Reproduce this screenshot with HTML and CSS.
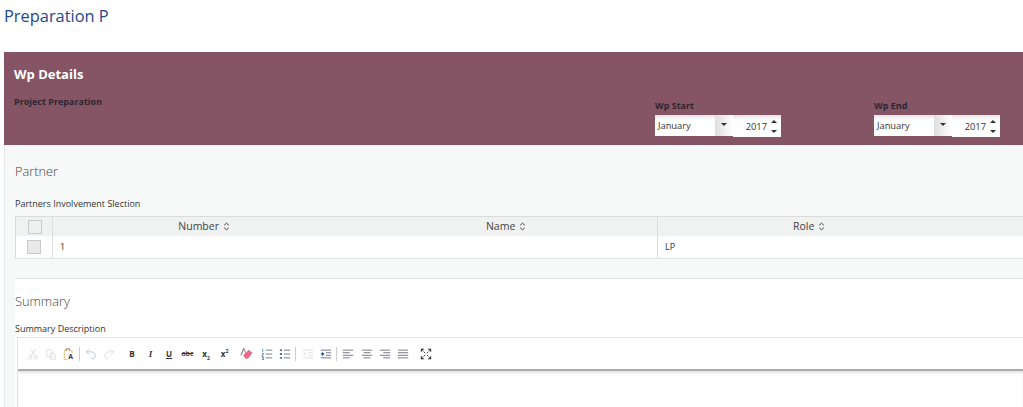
FILE: index.html
```html
<!DOCTYPE html>
<html lang="en">
<head>
<meta charset="utf-8">
<title>Preparation P</title>
<link rel="stylesheet" href="styles.css">
</head>
<body>
<h1 class="page-title">Preparation P</h1>
<main class="card">
  <header class="banner">
    <div class="banner-main">
      <h2 class="banner-title">Wp Details</h2>
      <p class="banner-sub">Project Preparation</p>
    </div>
    <div class="date-field date-start">
      <label class="date-label">Wp Start</label>
      <div class="date-controls">
        <div class="month"><span class="month-value">January</span><span class="month-btn"><i class="caret-down"></i></span></div>
        <div class="year"><span>2017</span><span class="spin"><i class="caret-up"></i><i class="caret-down"></i></span></div>
      </div>
    </div>
    <div class="date-field date-end">
      <label class="date-label">Wp End</label>
      <div class="date-controls">
        <div class="month"><span class="month-value">January</span><span class="month-btn"><i class="caret-down"></i></span></div>
        <div class="year"><span>2017</span><span class="spin"><i class="caret-up"></i><i class="caret-down"></i></span></div>
      </div>
    </div>
  </header>
  <section class="content">
    <h3 class="section-title">Partner</h3>
    <p class="field-label partner-label">Partners Involvement Slection</p>
    <div class="table">
      <div class="row head">
        <div class="cell c-check"><span class="box"></span></div>
        <div class="cell c-col">Number <svg class="sort" viewBox="0 0 7 9"><path d="M1.200 3.200 3.500 1.200 5.800 3.200M1.200 5.800 3.500 7.800 5.800 5.800"/></svg></div>
        <div class="cell c-col">Name <svg class="sort" viewBox="0 0 7 9"><path d="M1.200 3.200 3.500 1.200 5.800 3.200M1.200 5.800 3.500 7.800 5.800 5.800"/></svg></div>
        <div class="cell c-col sep-left">Role <svg class="sort" viewBox="0 0 7 9"><path d="M1.200 3.200 3.500 1.200 5.800 3.200M1.200 5.800 3.500 7.800 5.800 5.800"/></svg></div>
        <div class="cell c-rest"></div>
      </div>
      <div class="row body">
        <div class="cell c-check"><span class="box box-row"></span></div>
        <div class="cell c-col left">1</div>
        <div class="cell c-col"></div>
        <div class="cell c-col left sep-left">LP</div>
        <div class="cell c-rest"></div>
      </div>
    </div>
    <div class="summary-block">
      <h3 class="section-title summary">Summary</h3>
      <p class="field-label summary-label">Summary Description</p>
      <div class="editor">
        <div class="toolbar">
          <svg class="ic" viewBox="0 0 14 14"><g class="faint"><circle cx="3.500" cy="11" r="2"/><circle cx="10.500" cy="11" r="2"/><path d="M4.500 9.500 10 1M9.500 9.500 4 1"/></g></svg>
          <svg class="ic" viewBox="0 0 14 14"><g class="faint"><path d="M2 2h5l2 2v6H2zM6 6h4l2 2v5H6z"/></g></svg>
          <svg class="ic" viewBox="0 0 14 14"><path class="orange" d="M5 3H1.500v10.500H5M8 3h2.500v3"/><path class="slate" d="M3.500 3V1h4v2"/><text x="6" y="12.500" class="ic-a">A</text></svg>
          <span class="tb-sep"></span>
          <svg class="ic" viewBox="0 0 14 14"><path class="blue-faint" d="M5 1.500 1.500 4.500 5 7.500M2 4.500h5c3 0 5 2 5 4.500s-2 3.500-4.500 3.500"/></svg>
          <svg class="ic" viewBox="0 0 14 14"><path class="grey-faint" d="M9 1.500 12.500 4.500 9 7.500M12 4.500H7c-3 0-5 2-5 4.500s2 3.500 4.500 3.500"/></svg>
          <span class="tb-gap"></span>
          <b class="tb-text">B</b>
          <b class="tb-text it">I</b>
          <b class="tb-text un">U</b>
          <span class="tb-text small st">abc</span>
          <b class="tb-text">x<sub>2</sub></b>
          <b class="tb-text">x<sup>2</sup></b>
          <svg class="ic ic-wide" viewBox="0 0 14 14"><path class="slate" d="M1 9 4 1.500 6 6"/><path class="pink" d="M4 9l5.500-5.500 3.500 3L8.500 12H6z"/></svg>
          <svg class="ic" viewBox="0 0 14 14"><path class="blue-dash" d="M2 1v3.500M1 6.500h2L1 9.500h2M1 11h2v2.500H1"/><path class="slate" d="M5.500 2.500H13M5.500 7H13M5.500 11.500H13"/></svg>
          <svg class="ic" viewBox="0 0 14 14"><path class="navy-dash" d="M1 2.500h2.500M1 7h2.500M1 11.500h2.500"/><path class="slate" d="M5.500 2.500H13M5.500 7H13M5.500 11.500H13"/></svg>
          <span class="tb-sep"></span>
          <svg class="ic ic-shift" viewBox="0 0 14 14"><path class="grey-faint" d="M1 2.500H13M7 5.500H13M7 8.500H13M1 11.500H13M5 5 2 7l3 2"/></svg>
          <svg class="ic" viewBox="0 0 14 14"><path class="slate" d="M1 2.500H13M7 5.500H13M7 8.500H13M1 11.500H13"/><path class="blue" d="M1 7h4M3 5v4"/></svg>
          <span class="tb-sep"></span>
          <svg class="ic" viewBox="0 0 14 14"><path class="slate" d="M1 2.500H13M1 5.500H9M1 8.500H13M1 11.500H9"/></svg>
          <svg class="ic ic-shift" viewBox="0 0 14 14"><path class="slate" d="M1 2.500H13M3 5.500H11M1 8.500H13M3 11.500H11"/></svg>
          <svg class="ic" viewBox="0 0 14 14"><path class="slate" d="M1 2.500H13M5 5.500H13M1 8.500H13M5 11.500H13"/></svg>
          <svg class="ic" viewBox="0 0 14 14"><path class="slate" d="M1 2.500H13M1 5.500H13M1 8.500H13M1 11.500H13"/></svg>
          <span class="tb-gap"></span>
          <svg class="ic" viewBox="0 0 14 14"><path class="dark" d="M1 1h4L1 5zM13 1H9l4 4zM1 13h4l-4-4zM13 13H9l4-4z"/><path class="dark-line" d="M4 4l2 2M10 4 8 6M4 10l2-2M10 10 8 8"/></svg>
        </div>
        <div class="editor-body"></div>
      </div>
    </div>
  </section>
</main>
</body>
</html>
```
FILE: styles.css
```css
* { box-sizing: border-box; }
html, body { margin: 0; padding: 0; height: 407px; overflow: hidden; background: #fff; }
body { font-family: "Open Sans", sans-serif; color: #333; }

.page-title { margin: 0; padding: 5px 0 0 4px; height: 52px; font-size: 16.400px; line-height: 22px; font-weight: 400; color: #24478c; }

.card { margin-left: 4px; width: 1019px; border-left: 1px solid #e6e9e8; background: #f6f9f8; }

.banner { height: 93px; margin-left: -1px; background: #855566; display: flex; }
.banner-main { width: 651px; padding: 13px 0 0 10px; }
.banner-title { margin: 0; font-size: 13px; line-height: 18px; font-weight: 700; color: #fff; }
.banner-sub { margin: 13px 0 0; font-size: 9px; line-height: 12px; font-weight: 700; color: #2e2530; }
.date-field { padding-top: 48px; }
.date-start { width: 219px; }
.date-label { display: block; font-size: 9px; line-height: 12px; font-weight: 700; color: #2e2530; }
.date-controls { display: flex; margin-top: 3px; align-items: flex-start; }
.month { width: 78px; height: 21px; display: flex; background: linear-gradient(#e4e4e4, #fff 5px); font-size: 9.300px; line-height: 22px; color: #333; }
.month-value { flex: 1; padding-left: 3px; }
.month-btn { width: 18px; background: linear-gradient(90deg, #dedede, #f2f2f2 60%, #fff); display: flex; align-items: center; justify-content: center; }
.month-btn i { margin-top: -2px; }
.year { width: 48px; height: 22px; background: linear-gradient(#e4e4e4, #fff 5px); display: flex; font-size: 9.300px; line-height: 23px; color: #333; justify-content: flex-end; }
.spin { width: 14px; display: flex; flex-direction: column; align-items: center; justify-content: center; gap: 7px; }
i { display: block; width: 0; height: 0; border-left: 3px solid transparent; border-right: 3px solid transparent; }
.caret-down { border-top: 3px solid #333; }
.caret-up { border-bottom: 3px solid #333; }

.content { padding: 0 0 0 10px; }
.section-title { margin: 0; padding-top: 17px; font-size: 12.800px; line-height: 18px; font-weight: 300; color: #444; }
.field-label { margin: 0; font-size: 9px; line-height: 12px; color: #333; }
.partner-label { margin-top: 18px; }
.table { margin-top: 6px; border-top: 1px solid #dcdcdc; border-bottom: 1px solid #e3e3e3; border-left: 1px solid #dcdcdc; }
.row { display: flex; }
.head { height: 19px; background: #f0f1f1; font-size: 10.500px; line-height: 19px; color: #444; }
.body { height: 22px; background: #fff; font-size: 9px; line-height: 22px; color: #333; }
.cell { flex: none; }
.c-check { width: 37px; border-right: 1px solid #dcdcdc; display: flex; justify-content: center; align-items: center; }
.c-col { width: 302px; text-align: center; }
.c-col.left { text-align: left; padding-left: 7px; }
.sep-left { border-left: 1px solid #dcdcdc; width: 303px; }
.c-rest { width: 100px; }
.box { width: 14px; height: 14px; border: 1px solid #c9c9c9; background: #f0f0f0; margin-left: 1px; }
.box-row { margin-left: -1px; background: #e9e9e9; }
.sort { width: 7px; height: 9px; vertical-align: -1px; margin-left: 1px; fill: none; stroke: #444; stroke-width: 1; }

.summary-block { margin-top: 19px; border-top: 1px solid #e0e0e0; background: #fff; }
.section-title.summary { padding-top: 13px; }
.summary-label { margin-top: 13px; }
.editor { margin: 2px 0 0 2px; border-top: 1px solid #e3e3e3; border-left: 1px solid #e3e3e3; background: #fff; }
.toolbar { height: 31px; padding-left: 9px; display: flex; align-items: center; gap: 6px; background: #fff; font-size: 8px; color: #333; }
.ic { width: 12px; height: 12px; flex: none; fill: none; stroke-width: 1; }
.ic-wide { width: 13px; height: 13px; margin-left: 3px; margin-right: 2px; }
.ic-shift { margin-left: 1px; }
.faint { stroke: #dcdcdc; }
.orange { stroke: #e8b46a; }
.slate { stroke: #667; }
.blue { stroke: #2a5aa8; stroke-width: 1.500; }
.blue-faint { stroke: #a9c0de; }
.grey-faint { stroke: #d9d9d9; }
.pink { fill: #ea6a88; stroke: #ea6a88; }
.blue-dash { stroke: #3a76b8; }
.navy-dash { stroke: #28406a; stroke-width: 1.500; }
.dark { fill: #333; stroke: none; }
.dark-line { stroke: #333; }
.ic-a { font-size: 8px; font-weight: 700; fill: #334; stroke: none; font-family: "Open Sans", sans-serif; }
.tb-sep { width: 1px; height: 14px; background: #ccc; flex: none; margin-left: -2px; margin-right: -1px; }
.tb-gap { width: 0; flex: none; margin-left: -1px; }
.tb-text { width: 12px; flex: none; text-align: center; line-height: 12px; margin-right: 0.500px; }
.it { font-style: italic; font-family: "Liberation Serif", serif; font-size: 9px; }
.un { text-decoration: underline; }
.small { font-size: 7px; font-weight: 600; }
.st { text-decoration: line-through; }
sub, sup { font-size: 5px; line-height: 0; }
.editor-body { height: 38px; border-top: 2px solid #aaa; box-shadow: inset 0 2px 2px #e6e6e6; background: #fff; }
```
